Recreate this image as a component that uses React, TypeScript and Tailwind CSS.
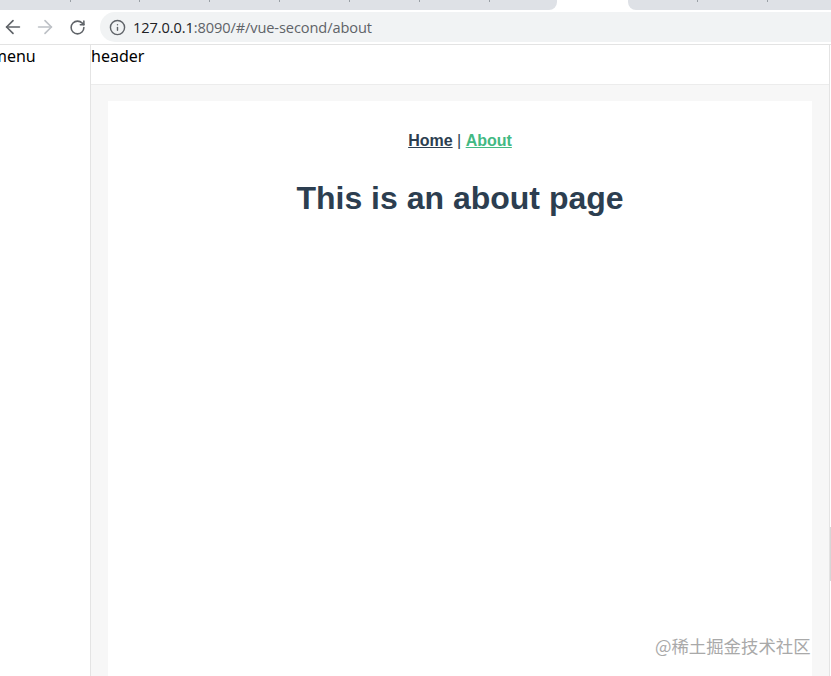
import React from "react";
import { ArrowLeft, ArrowRight, RotateCw, Info } from "lucide-react";

export default function App() {
  const seps = [70, 139, 209, 279, 349, 419, 489, 697, 767];
  return (
    <div className="relative h-[676px] w-[831px] overflow-hidden bg-white" style={{ fontFamily: '"Noto Sans", sans-serif' }}>
      {/* tab strip */}
      <div className="relative flex h-[10px]">
        <div className="h-full w-[557px] rounded-br-[8px] bg-[#dee1e6]" />
        <div className="h-full w-[71px] bg-white" />
        <div className="h-full flex-1 rounded-bl-[8px] bg-[#dee1e6]" />
        {seps.map((x) => (
          <div key={x} className="absolute top-0 h-[2px] w-px bg-[#9aa0a6]" style={{ left: x }} />
        ))}
      </div>
      {/* toolbar */}
      <div className="flex h-[35px] items-center border-b border-[#e3e3e3] bg-white">
        <div className="flex w-[100px] items-center">
          <div className="flex w-[26px] justify-center text-[#5f6368]">
            <ArrowLeft size={22} strokeWidth={1.8} />
          </div>
          <div className="ml-[6px] flex w-[26px] justify-center text-[#bdc1c6]">
            <ArrowRight size={22} strokeWidth={1.8} />
          </div>
          <div className="ml-[6px] flex w-[26px] justify-center text-[#5f6368]">
            <RotateCw size={17} strokeWidth={2.2} />
          </div>
        </div>
        <div className="flex h-[30px] flex-1 items-center rounded-l-full bg-[#f1f3f4] pl-[9px]">
          <Info size={17} strokeWidth={2} className="text-[#5f6368]" />
          <span className="ml-[7px] text-[14.6px] leading-none tracking-[-0.1px]" style={{ fontFamily: '"Open Sans", sans-serif' }}>
            <span className="text-[#202124]">127.0.0.1</span>
            <span className="text-[#5f6368]">:8090/#/vue-second/about</span>
          </span>
        </div>
      </div>
      {/* page */}
      <div className="flex h-[631px]">
        <div className="w-[91px] shrink-0 border-r border-[#e4e4e4] text-[16px] leading-[22px] text-black">
          <div className="ml-[-8px]">menu</div>
        </div>
        <div className="flex w-[739px] shrink-0 flex-col border-r border-[#e4e4e4]">
          <div className="h-[40px] shrink-0 border-b border-[#ececec] text-[16px] leading-[22px] text-black">header</div>
          <div className="flex flex-1 flex-col bg-[#f7f7f7] pl-[17px] pr-[17px] pt-[16px]">
            <div
              className="flex-1 bg-white text-center text-[#2c3e50]"
              style={{ fontFamily: '"Liberation Sans", Arial, sans-serif' }}
            >
              <div className="pt-[31px] text-[16px] leading-[18px]">
                <a className="font-bold text-[#2c3e50] underline">Home</a> | <a className="font-bold text-[#42b983] underline">About</a>
              </div>
              <h1 className="mt-[30px] text-[32px] font-bold leading-[37px]">This is an about page</h1>
            </div>
          </div>
        </div>
      </div>
      <div className="absolute right-0 top-[527px] h-[54px] w-px bg-[#d6d6d6]" />
      {/* watermark */}
      <div
        className="absolute left-[655px] top-[634px] text-[17.4px] leading-[24px] text-[#a9a9a9]"
        style={{ fontFamily: '"Noto Sans CJK SC", sans-serif' }}
      >
        @稀土掘金技术社区
      </div>
    </div>
  );
}
